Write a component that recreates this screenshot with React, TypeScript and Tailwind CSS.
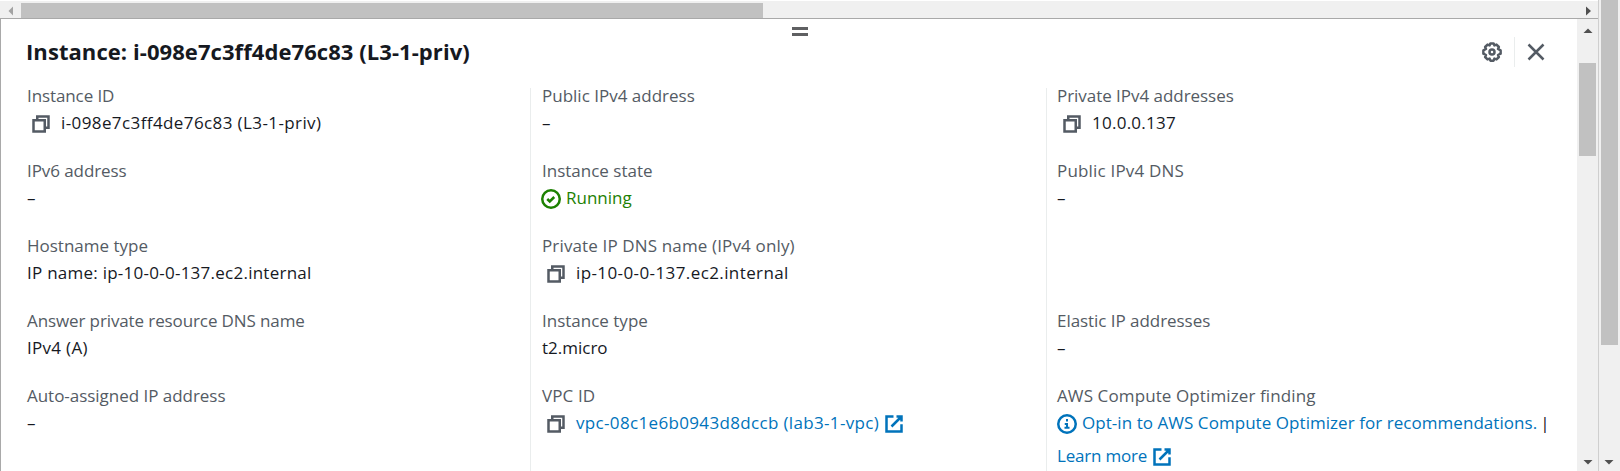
import type { ReactNode } from 'react';

const ICON = 'block h-5 w-5 shrink-0 fill-none stroke-current stroke-2';

function CopyIcon({ inset = 'ml-[4px]' }: { inset?: string }) {
  return (
    <svg viewBox="0 0 16 16" className={`${ICON} mt-[5px] mr-[10px] ${inset} text-[#545b64]`}>
      <path d="M2 5h9v9H2z" />
      <path d="M5 5V2h9v9h-3" />
    </svg>
  );
}

function ExternalIcon() {
  return (
    <svg viewBox="0 0 16 16" className={`${ICON} mt-[5px] ml-[5px]`}>
      <path d="M14 8.2V14H2V2h5.6M10 2h4v4M6 10l7.6-7.6" />
    </svg>
  );
}

function CheckIcon() {
  return (
    <svg viewBox="0 0 16 16" className={`${ICON} mt-[5px] mr-[5px] -ml-px`}>
      <circle cx="8" cy="8" r="7" />
      <path d="M5 8l2 2 3.6-3.6" />
    </svg>
  );
}

function InfoIcon() {
  return (
    <svg viewBox="0 0 16 16" className={`${ICON} mt-[5px] mr-[5px]`}>
      <circle cx="8" cy="8" r="7" />
      <path d="M8 11V8H6.2M10 11H6M8 6V4" strokeWidth="1.6" />
    </svg>
  );
}

function GearIcon() {
  return (
    <svg viewBox="0 0 16 16" className="block h-5 w-5 fill-none stroke-[#545b64] stroke-2 [stroke-linejoin:round]">
      <path d="M6.7 1.1h2.6l.6 1.6 1.7-.6 1.9 1.9-.7 1.6 2.1 1.1v2.6l-2.1 1.1.7 1.6-1.9 1.9-1.7-.6-.6 1.6H6.7l-.6-1.6-1.7.6L2.5 12l.7-1.6-2.1-1.1V6.7l2.1-1.1L2.5 4l1.9-1.9 1.7.6z" />
      <circle cx="8" cy="8" r="2" />
    </svg>
  );
}

function CloseIcon() {
  return (
    <svg viewBox="0 0 16 16" className="block h-5 w-5 fill-none stroke-[#545b64] stroke-2">
      <path d="M2 2l12 12M14 2L2 14" />
    </svg>
  );
}

function Field({ label, tracking = '', children }: { label: string; tracking?: string; children: ReactNode }) {
  return (
    <div className="flex h-12 flex-col gap-1.5">
      <div className={`leading-[15px] text-[#545b64] ${tracking}`}>{label}</div>
      <div className="flex leading-[27px]">{children}</div>
    </div>
  );
}

function Arrow({ d, className = 'fill-[#505050]' }: { d: string; className?: string }) {
  return (
    <svg viewBox="0 0 10 10" className={`block h-[10px] w-[10px] ${className}`}>
      <path d={d} />
    </svg>
  );
}

const DOWN = 'M0.5 3h9L5 7.5z';

export default function App() {
  return (
    <div className="flex h-[471px] w-[1620px] overflow-hidden bg-white font-['Open_Sans','Noto_Sans',sans-serif] text-[17px] whitespace-nowrap text-[#16191f]">
      <div className="flex w-[1598px] flex-col">
        <div className="flex h-[19px] shrink-0 border-t border-b border-t-white border-b-[#a9a9a9] bg-[#f0f0f0] pt-0.5">
          <div className="flex w-[21px] items-center pl-[6px]">
            <Arrow d="M7 0.5v9L2.5 5z" className="fill-[#a3a3a3]" />
          </div>
          <div className="w-[742px] bg-[#c1c1c1]" />
          <div className="flex flex-1 items-center justify-end pr-[5px]">
            <Arrow d="M3 0.5v9L8 5z" />
          </div>
        </div>

        <div className="flex min-h-0 flex-1 border-l border-[#a9a9a9]">
          <div className="flex w-[1576px] flex-col">
            <div className="flex h-[69px] shrink-0 pt-2">
              <h2 className="w-[765px] pt-[5px] pl-[25px] text-[22px] leading-[38px] font-bold tracking-[0.07px]">
                Instance: i-098e7c3ff4de76c83 (L3-1-priv)
              </h2>
              <div className="ml-[26px] flex w-4 flex-col gap-[3px]">
                <div className="h-[3px] bg-[#5f6062]" />
                <div className="h-[3px] bg-[#5f6062]" />
              </div>
              <div className="mt-[10px] ml-auto flex h-[30px] items-center pr-[31px]">
                <GearIcon />
                <div className="mr-[11px] ml-3 h-[30px] w-px bg-[#eaeded]" />
                <CloseIcon />
              </div>
            </div>

            <div className="grid min-h-0 flex-1 grid-cols-[529px_516px_531px]">
              <div className="flex flex-col gap-[27px] pl-[26px]">
                <Field label="Instance ID" tracking="tracking-[-0.1px]">
                  <CopyIcon />
                  <span className="tracking-[0.4px]">i-098e7c3ff4de76c83 (L3-1-priv)</span>
                </Field>
                <Field label="IPv6 address" tracking="tracking-[-0.08px]">–</Field>
                <Field label="Hostname type">
                  <span className="tracking-[0.25px]">IP name: ip-10-0-0-137.ec2.internal</span>
                </Field>
                <Field label="Answer private resource DNS name" tracking="tracking-[-0.11px]">
                  <span className="tracking-[0.3px]">IPv4 (A)</span>
                </Field>
                <Field label="Auto-assigned IP address" tracking="tracking-[-0.03px]">–</Field>
              </div>

              <div className="flex flex-col gap-[27px] border-l border-[#eaeded] pl-[11px]">
                <Field label="Public IPv4 address">–</Field>
                <Field label="Instance state">
                  <span className="flex text-[#1d8102]">
                    <CheckIcon />
                    Running
                  </span>
                </Field>
                <Field label="Private IP DNS name (IPv4 only)" tracking="tracking-[0.14px]">
                  <CopyIcon />
                  <span className="tracking-[0.4px]">ip-10-0-0-137.ec2.internal</span>
                </Field>
                <Field label="Instance type">t2.micro</Field>
                <Field label="VPC ID" tracking="tracking-[0.1px]">
                  <CopyIcon />
                  <a className="flex tracking-[0.34px] text-[#0073bb]">
                    vpc-08c1e6b0943d8dccb (lab3-1-vpc)
                    <ExternalIcon />
                  </a>
                </Field>
              </div>

              <div className="flex flex-col gap-[27px] border-l border-[#eaeded] pl-[10px]">
                <Field label="Private IPv4 addresses" tracking="tracking-[-0.04px]">
                  <CopyIcon inset="ml-[5px]" />
                  <span className="tracking-[0.25px]">10.0.0.137</span>
                </Field>
                <Field label="Public IPv4 DNS" tracking="tracking-[0.18px]">–</Field>
                <div className="h-12" />
                <Field label="Elastic IP addresses" tracking="tracking-[-0.05px]">–</Field>
                <Field label="AWS Compute Optimizer finding" tracking="tracking-[0.11px]">
                  <div className="flex flex-col gap-1.5">
                    <div className="flex">
                      <a className="flex tracking-[0.05px] text-[#0073bb]">
                        <InfoIcon />
                        Opt-in to AWS Compute Optimizer for recommendations.
                      </a>
                      <span className="ml-[3px]">|</span>
                    </div>
                    <a className="flex tracking-[-0.2px] text-[#0073bb]">
                      Learn more
                      <ExternalIcon />
                    </a>
                  </div>
                </Field>
              </div>
            </div>
          </div>

          <div className="flex w-[21px] flex-col items-center bg-[#f0f0f0]">
            <div className="flex h-[44px] pt-[7px]">
              <Arrow d="M0.5 7h9L5 2.5z" />
            </div>
            <div className="h-[93px] w-[17px] bg-[#c1c1c1]" />
            <div className="mt-auto pb-[4px]">
              <Arrow d={DOWN} />
            </div>
          </div>
        </div>
      </div>

      <div className="flex w-[22px] flex-col items-center border-l border-[#cfcfcf] bg-[#f0f0f0] pr-px">
        <div className="h-[345px] w-[17px] bg-[#c1c1c1]" />
        <div className="mt-auto pb-[4px]">
          <Arrow d={DOWN} />
        </div>
      </div>
    </div>
  );
}
